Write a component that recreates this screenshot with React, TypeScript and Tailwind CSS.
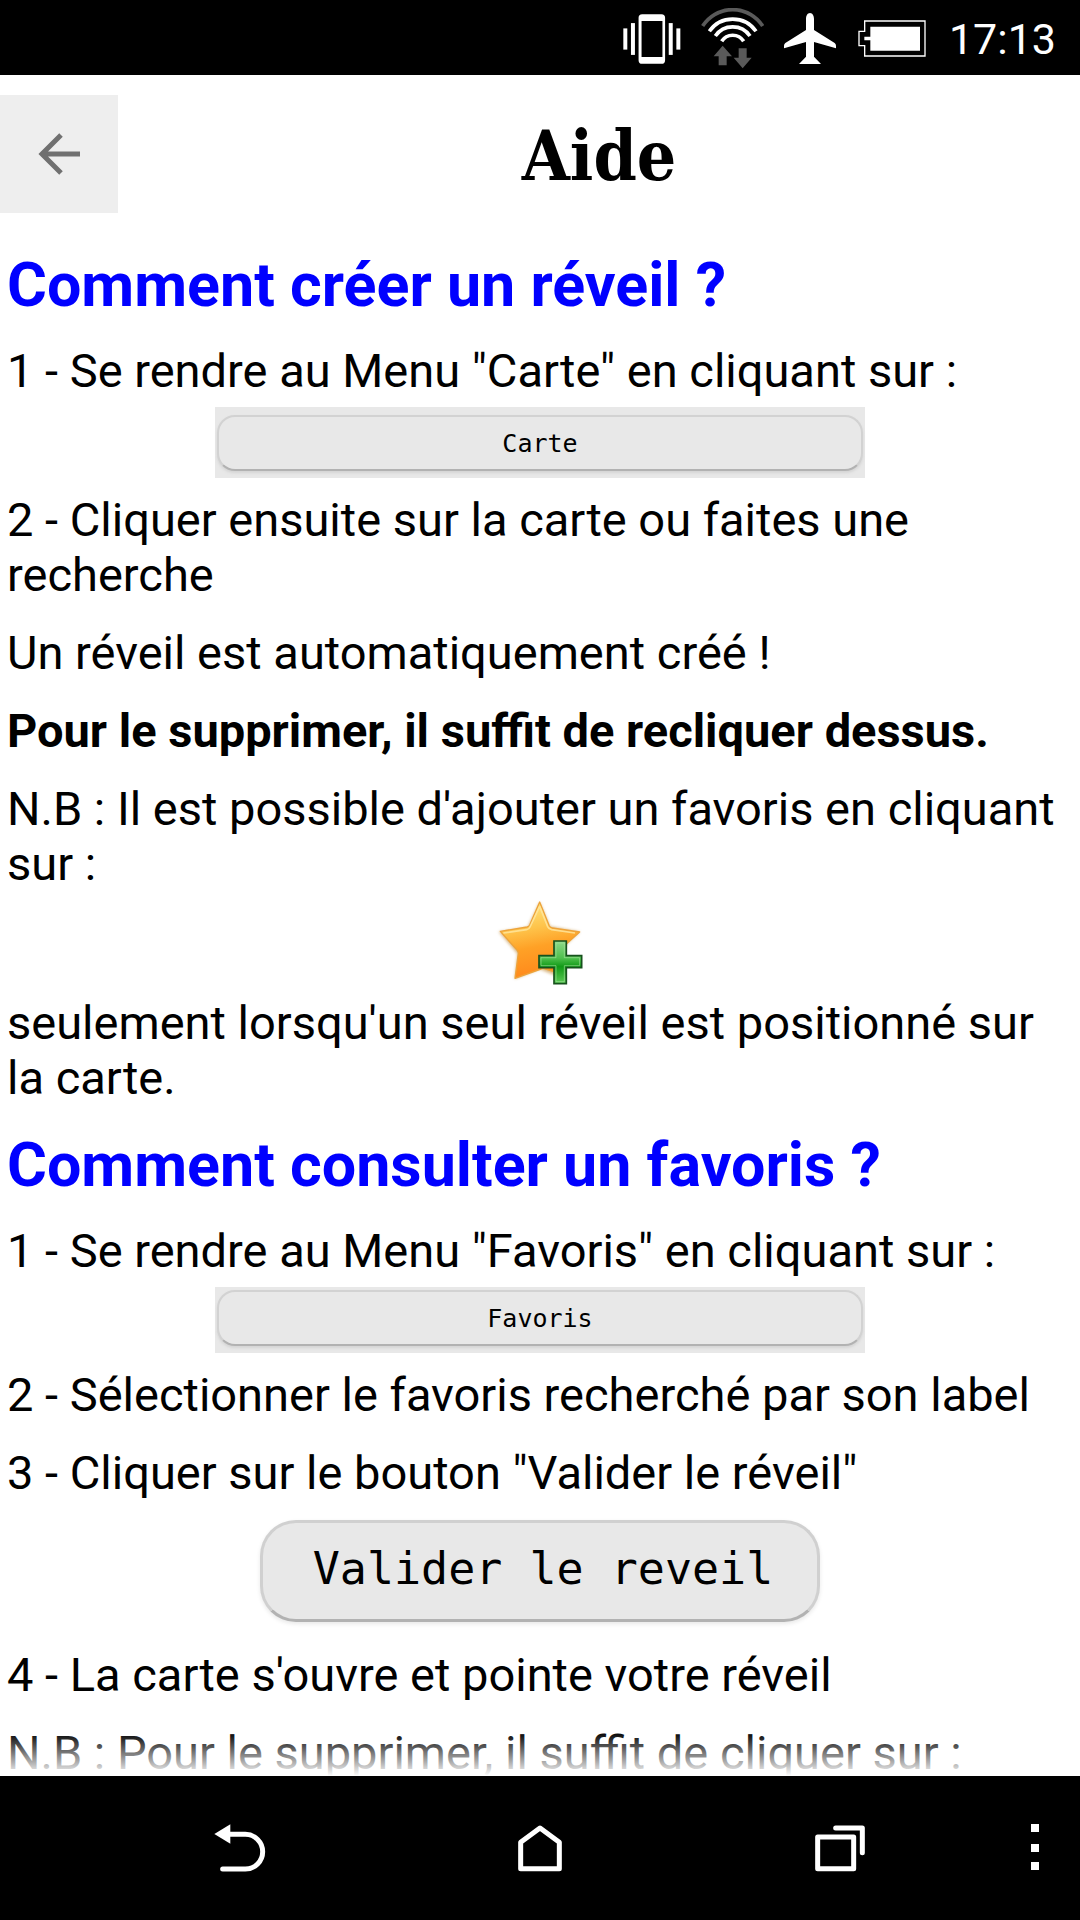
import type { ReactNode } from 'react';

function StatusBar() {
  return (
    <div className="flex h-[75px] shrink-0 items-center justify-end bg-black pt-0.5 pr-6 text-white">
      <svg className="mr-5 h-[50px] w-[58px]" viewBox="72 36 175 150" fill="currentColor">
        <path fillRule="evenodd" d="M130 36h58a11 11 0 0 1 11 11v128a11 11 0 0 1-11 11h-58a11 11 0 0 1-11-11V47a11 11 0 0 1 11-11ZM128 57v108h63V57Z" />
        <rect x="96" y="63" width="12" height="96" />
        <rect x="210" y="63" width="12" height="96" />
        <rect x="73" y="79" width="12" height="64" />
        <rect x="233" y="79" width="12" height="64" />
      </svg>
      <svg className="mr-5 h-[61px] w-[63px]" viewBox="304 23 189 183" fill="none" stroke="currentColor" strokeWidth="11">
        <path d="M309 77A107 107 0 0 1 489 77" stroke="#5a5a5a" />
        <path d="M329 93A85 85 0 0 1 469 93" />
        <path d="M347 107A63 63 0 0 1 451 107" />
        <path d="M366 123A39 39 0 0 1 432 123" />
        <path d="M369 136l28 32h-16v27h-24v-27h-15ZM417 144h24v28h15l-27 32-27-32h15Z" fill="#5a5a5a" stroke="none" />
      </svg>
      <svg className="mr-[22px] h-[51px] w-[52px]" viewBox="549 36 156 153" fill="currentColor">
        <path d="M627 36c8 0 12 9 12 18v33l62 39q4 3 4 8v8l-66-19v44l21 22h-66l21-22v-44l-66 19v-8q0-5 4-8l62-39V54c0-9 4-18 12-18Z" />
      </svg>
      <svg className="mr-[23px] h-[37px] w-[68px]" viewBox="771 57 204 111">
        <path d="M791 60h181v105H791v-31h-17V91h17Z" fill="none" stroke="currentColor" strokeWidth="4" />
        <path d="M808 77h149v72H808v-31h-18v-11h18Z" fill="currentColor" />
      </svg>
      <span className="pt-0.5 text-[43px] leading-none">17:13</span>
    </div>
  );
}

function StarPlusIcon() {
  return (
    <svg className="h-[88px] w-[88px]" viewBox="50 20 264 264">
      <defs>
        <linearGradient id="star" x1="0" y1="0" x2="0.2" y2="1">
          <stop offset="0" stopColor="#ffec8c" />
          <stop offset="0.4" stopColor="#fec44b" />
          <stop offset="0.65" stopColor="#ffa126" />
          <stop offset="1" stopColor="#ff8a1c" />
        </linearGradient>
        <linearGradient id="plus" x1="0" y1="0" x2="0" y2="1">
          <stop offset="0" stopColor="#8fd98b" />
          <stop offset="0.4" stopColor="#4fc04d" />
          <stop offset="0.6" stopColor="#119a17" />
          <stop offset="1" stopColor="#5ccb55" />
        </linearGradient>
        <filter id="glow" x="-20%" y="-20%" width="140%" height="140%">
          <feGaussianBlur stdDeviation="5" />
        </filter>
      </defs>
      <path d="M181 32l31 73 90 16-65 60 12 80-68-27-75 29 8-76-56-66 87-14Z" fill="#c99a50" opacity="0.7" filter="url(#glow)" />
      <path d="M181 32l29 72q3 5 9 6l82 12-61 55q-5 4-4 9l10 62-51-16q-5-2-10 1l-78 28 10-75q0-5-4-10l-50-56 80-13q5-1 8-6Z" fill="url(#star)" stroke="#eda33a" strokeWidth="4" strokeLinejoin="round" />
      <path d="M181 45l24 61q3 7 12 9l70 10M72 125l70-10q7-1 10-8l29-62" fill="none" stroke="#ffe7a0" strokeWidth="5" opacity="0.8" />
      <path d="M224 149h37v44h46v36h-46v48h-37v-48h-45v-36h45Z" fill="url(#plus)" stroke="#17511d" strokeWidth="5" />
      <path d="M230 155h25v44h46v24h-46v48h-25v-48h-45v-24h45Z" fill="none" stroke="#a5e39d" strokeWidth="3" opacity="0.6" />
    </svg>
  );
}

function MenuButton({ children }: { children: ReactNode }) {
  return (
    <button
      type="button"
      className="block h-14 w-full rounded-[18px] border-2 border-[#d2d2d2] border-b-[#b2b2b2] bg-[#e8e8e8] font-['DejaVu_Sans_Mono',monospace] text-[25px] leading-none shadow-[0_2px_3px_#d4d4d4]"
    >
      {children}
    </button>
  );
}

function Title({ children }: { children: ReactNode }) {
  return <h2 className="mb-[23px] text-[61px] leading-[70px] font-bold text-[#0000ff]">{children}</h2>;
}

function NavBar() {
  return (
    <nav className="flex h-36 shrink-0 bg-black pl-[90px] text-white">
      <button type="button" aria-label="Retour" className="flex flex-1 items-center justify-center">
        <svg className="h-12 w-[52px]" viewBox="104 70 156 144" fill="none" stroke="currentColor" strokeWidth="15" strokeLinecap="round">
          <path d="M150 101h48a52 52 0 0 1 0 104h-68" />
          <path d="M105 100l48-29v58Z" fill="currentColor" stroke="none" />
        </svg>
      </button>
      <button type="button" aria-label="Accueil" className="flex flex-1 items-center justify-center">
        <svg className="h-12 w-11" viewBox="1014 71 132 144" fill="none" stroke="currentColor" strokeWidth="15" strokeLinejoin="round">
          <path d="M1080 83l58 43v79h-116v-79Z" />
        </svg>
      </button>
      <button type="button" aria-label="Applications récentes" className="flex flex-1 items-center justify-center">
        <svg className="h-12 w-[50px]" viewBox="105 71 150 144" fill="none" stroke="currentColor" strokeWidth="15" strokeLinecap="round" strokeLinejoin="round">
          <path d="M113 110h108v95h-108ZM167 83h80v74" />
        </svg>
      </button>
      <button type="button" aria-label="Options" className="flex w-[90px] items-center justify-center">
        <svg className="h-12 w-2" viewBox="0 0 8 48" fill="currentColor">
          <path d="M0 0h8v8H0ZM0 20h8v8H0ZM0 38h8v8H0Z" />
        </svg>
      </button>
    </nav>
  );
}

export default function App() {
  return (
    <div className="flex h-screen flex-col bg-white font-[Roboto,sans-serif] text-black">
      <StatusBar />
      <header className="mt-5 flex shrink-0 items-center">
        <button type="button" aria-label="Retour" className="flex h-[118px] w-[118px] items-center justify-center bg-[#eeeeee]">
          <svg className="h-[42px] w-[42px]" viewBox="0 0 42 42" fill="none" stroke="#707070" strokeWidth="5">
            <path d="M42 21H4M23 2L4 21l19 19" />
          </svg>
        </button>
        <h1 className="flex-1 pt-1 text-center font-['DejaVu_Serif_Condensed','DejaVu_Serif',serif] text-[69px] leading-[80px] font-bold">
          Aide
        </h1>
      </header>

      <div className="relative min-h-0 flex-1">
        <main className="h-full overflow-y-auto px-[7px] pt-[37px] text-[47px] leading-[55px] [scrollbar-width:none]">
          <Title>Comment créer un réveil ?</Title>
          <p>1 - Se rendre au Menu "Carte" en cliquant sur :</p>
          <div className="mx-auto mt-[9px] mb-3.5 w-[61%] bg-[#e8e8e8] px-[2px] pt-2 pb-[7px]">
            <MenuButton>Carte</MenuButton>
          </div>
          <p className="mb-[23px]">2 - Cliquer ensuite sur la carte ou faites une recherche</p>
          <p className="mb-[23px]">Un réveil est automatiquement créé !</p>
          <p className="mb-[23px] font-bold">Pour le supprimer, il suffit de recliquer dessus.</p>
          <p>N.B : Il est possible d'ajouter un favoris en cliquant sur :</p>
          <div className="mt-[7px] mb-[9px] flex justify-center">
            <StarPlusIcon />
          </div>
          <p className="mb-[25px]">seulement lorsqu'un seul réveil est positionné sur la carte.</p>

          <Title>Comment consulter un favoris ?</Title>
          <p>1 - Se rendre au Menu "Favoris" en cliquant sur :</p>
          <div className="mx-auto mt-[9px] mb-3.5 w-[61%] bg-[#e8e8e8] px-[2px] pt-[3px] pb-[7px]">
            <MenuButton>Favoris</MenuButton>
          </div>
          <p className="mb-[23px]">2 - Sélectionner le favoris recherché par son label</p>
          <p>3 - Cliquer sur le bouton "Valider le réveil"</p>
          <div className="mt-5 mb-[25px] flex justify-center">
            <button
              type="button"
              className="h-[102px] rounded-[36px] border-[3px] border-[#d0d0d0] border-b-[#b2b2b2] bg-[#e8e8e8] pr-11 pb-1.5 pl-[50px] font-['DejaVu_Sans_Mono',monospace] text-[45px] leading-none shadow-[0_2px_4px_#e8e8e8]"
            >
              Valider le reveil
            </button>
          </div>
          <p className="mb-[23px]">4 - La carte s'ouvre et pointe votre réveil</p>
          <p>N.B : Pour le supprimer, il suffit de cliquer sur :</p>
        </main>
        <div className="pointer-events-none absolute inset-x-0 bottom-0 h-11 bg-linear-to-t from-white to-transparent" />
      </div>

      <NavBar />
    </div>
  );
}
